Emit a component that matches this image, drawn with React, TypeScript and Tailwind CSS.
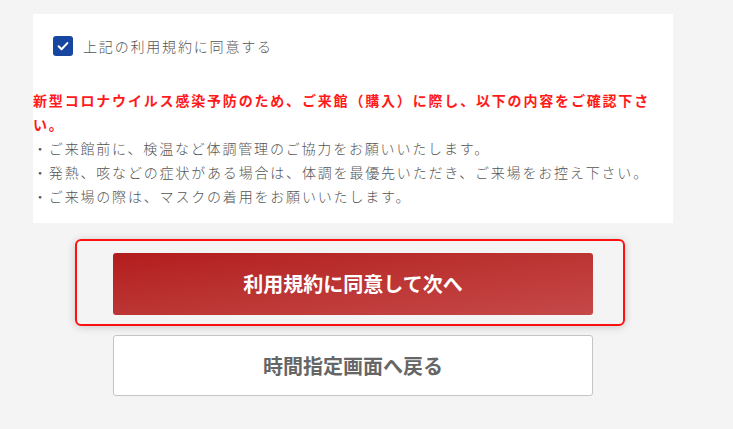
import React from "react";

export default function App() {
  const font = { fontFamily: '"Noto Sans CJK JP", "Noto Sans", sans-serif' };
  return (
    <div className="w-[733px] h-[429px] bg-[#f4f4f4] overflow-hidden" style={font}>
      <div className="pt-[14px] pl-[33px]">
        <div className="w-[640px] bg-white pt-[20px] pb-[15px] text-[14px] leading-[24px] tracking-[0.13em] text-[#555] font-light">
          <label className="flex items-center pl-[20px] gap-[10px]">
            <span className="w-[20px] h-[20px] rounded-[3px] bg-[#1646a0] flex items-center justify-center">
              <svg width="14" height="14" viewBox="0 0 24 24" fill="none" stroke="white" strokeWidth="3.5" strokeLinecap="round" strokeLinejoin="round">
                <path d="M4.5 12.5l5 5L19.5 7" />
              </svg>
            </span>
            <span>上記の利用規約に同意する</span>
          </label>
          <div className="mt-[30px] pr-[6px]">
            <p className="font-bold text-[#ff1a1a]">
              新型コロナウイルス感染予防のため、ご来館（購入）に際し、以下の内容をご確認下さい。
            </p>
            <p>・ご来館前に、検温など体調管理のご協力をお願いいたします。</p>
            <p>・発熱、咳などの症状がある場合は、体調を最優先いただき、ご来場をお控え下さい。</p>
            <p>・ご来場の際は、マスクの着用をお願いいたします。</p>
          </div>
        </div>
      </div>
      <div className="pl-[75px] pt-[16px]">
        <div className="w-[550px] border-2 border-[#ff1010] rounded-[6px] shadow-[0_1px_8px_rgba(0,0,0,0.18)] pl-[36px] pr-[30px] pt-[12px] pb-[9px]">
          <button className="w-[480px] h-[62px] rounded-[3px] bg-gradient-to-br from-[#b21c1c] to-[#c54848] text-white font-bold text-[20px] leading-[28px]">
            利用規約に同意して次へ
          </button>
        </div>
      </div>
      <div className="pl-[113px] pt-[9px]">
        <button className="w-[480px] h-[61px] rounded-[3px] bg-white border border-[#c4c4c4] text-[#666] font-bold text-[20px] leading-[28px]">
          時間指定画面へ戻る
        </button>
      </div>
    </div>
  );
}
